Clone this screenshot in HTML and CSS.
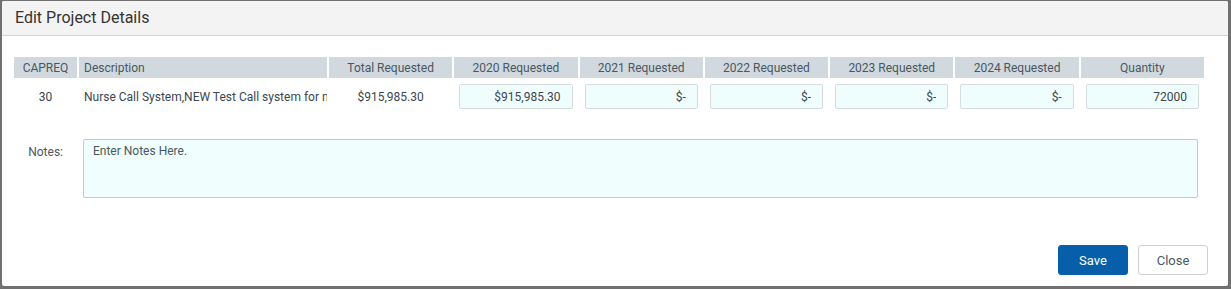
FILE: index.html
```html
<!DOCTYPE html>
<html lang="en">
<head>
    <meta charset="UTF-8">
    <meta name="viewport" content="width=device-width, initial-scale=1.0">
    <title>Edit Project Details</title>
    <link rel="stylesheet" href="styles.css">
</head>
<body>
    <div class="dialog">
        <div class="dialog-head">Edit Project Details</div>
        <div class="dialog-body">
            <table class="details">
                <tr>
                    <th class="col-id">CAPREQ</th>
                    <th class="col-desc">Description</th>
                    <th>Total Requested</th>
                    <th>2020 Requested</th>
                    <th>2021 Requested</th>
                    <th>2022 Requested</th>
                    <th>2023 Requested</th>
                    <th>2024 Requested</th>
                    <th>Quantity</th>
                </tr>
                <tr>
                    <td class="col-id">30</td>
                    <td class="col-desc"><div class="clip">Nurse Call System,NEW Test Call system for nurses</div></td>
                    <td>$915,985.30</td>
                    <td><input type="text" value="$915,985.30"></td>
                    <td><input type="text" value="$-"></td>
                    <td><input type="text" value="$-"></td>
                    <td><input type="text" value="$-"></td>
                    <td><input type="text" value="$-"></td>
                    <td><input type="text" value="72000"></td>
                </tr>
            </table>
            <div class="notes">
                <label for="notes">Notes:</label>
                <textarea id="notes">Enter Notes Here.</textarea>
            </div>
        </div>
        <div class="dialog-foot">
            <button class="btn btn-save">Save</button>
            <button class="btn btn-close">Close</button>
        </div>
    </div>
</body>
</html>
```

FILE: styles.css
```css
body{
    margin: 0;
    background-color: #707070;
    font-family: Roboto, "Liberation Sans", Arial, sans-serif;
    color: #3c4850;
}
.dialog{
    margin: 1px 3px 0 2px;
    height: 285px;
    background: #fff;
    border-radius: 2px;
    display: flex;
    flex-direction: column;
}
.dialog-head{
    height: 34px;
    line-height: 34px;
    background: #f3f3f3;
    border-bottom: 1px solid #d4d4d4;
    border-radius: 2px 2px 0 0;
    padding-left: 13px;
    font-size: 16px;
    color: #333;
}
.dialog-body{
    padding: 19px 0 0 10px;
    flex: 1;
}
.details{
    width: 1194px;
    border-spacing: 2px;
    table-layout: fixed;
}
.details th{
    background: #d1d9df;
    color: #4a5761;
    font-weight: normal;
    font-size: 12px;
    height: 21px;
    padding: 0 5px;
    text-align: center;
}
.details td{
    font-size: 12px;
    color: #3a4650;
    text-align: center;
    padding: 4px 5px;
    height: 25px;
}
.details .col-id{
    width: 53px;
}
.details .col-desc{
    width: 243px;
    text-align: left;
    padding-right: 0;
}
.clip{
    white-space: nowrap;
    overflow: hidden;
}
.details input{
    box-sizing: border-box;
    width: 100%;
    height: 25px;
    border: 1px solid #d6dde0;
    border-radius: 2px;
    background: #f0fdfd;
    text-align: right;
    padding: 0 11px;
    font-family: inherit;
    font-size: 12px;
    color: #3a4650;
}
.notes{
    display: flex;
    margin-top: 24px;
}
.notes label{
    width: 53px;
    padding: 6px 20px 0 0;
    margin-left: -2px;
    text-align: right;
    font-size: 12px;
    color: #4a5761;
}
.notes textarea{
    box-sizing: border-box;
    width: 1115px;
    height: 59px;
    border: 1px solid #c8c8c8;
    border-radius: 2px;
    background: #f0fefe;
    padding: 4px 9px;
    font-family: inherit;
    font-size: 12px;
    color: #4a5761;
    resize: none;
}
.dialog-foot{
    display: flex;
    justify-content: flex-end;
    gap: 10px;
    padding: 0 20px 11px 0;
}
.btn{
    width: 70px;
    height: 30px;
    border-radius: 3px;
    font-family: inherit;
    font-size: 13px;
}
.btn-save{
    background: #065fa8;
    border: 1px solid #065fa8;
    color: #fff;
}
.btn-close{
    background: #fff;
    border: 1px solid #cfcfcf;
    color: #4a5761;
}
```
